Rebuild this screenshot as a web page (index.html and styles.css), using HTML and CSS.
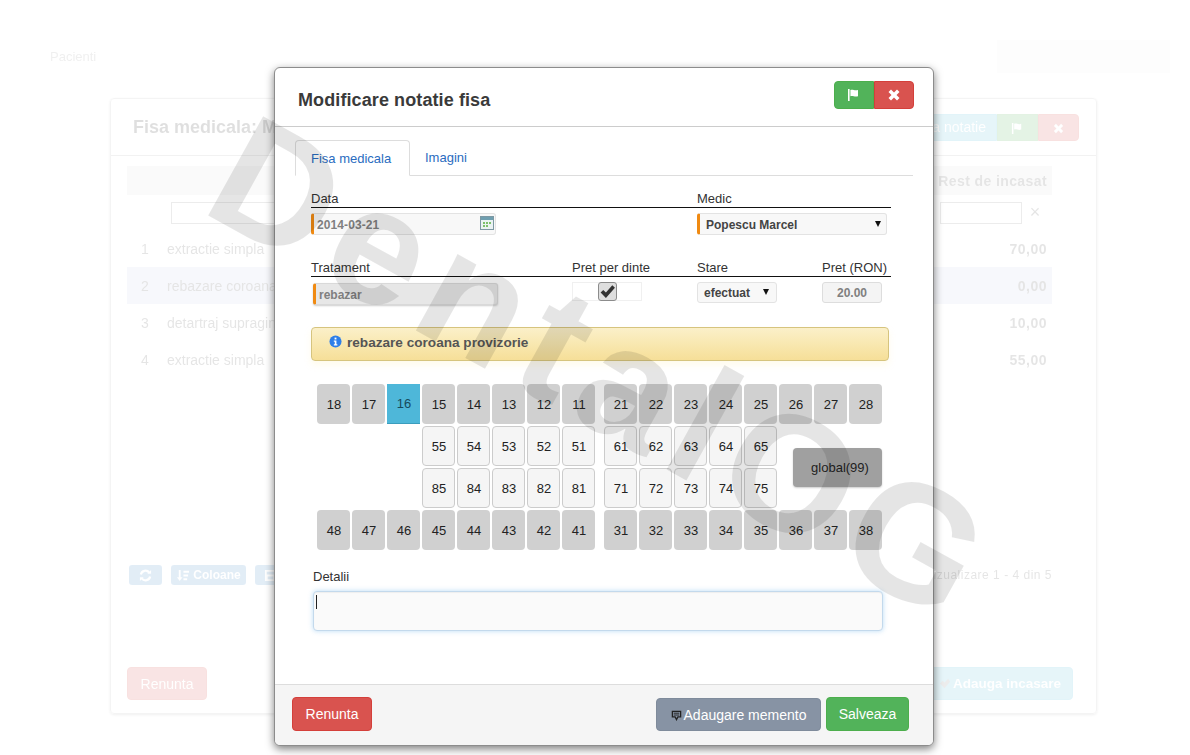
FILE: index.html
```html
<!DOCTYPE html>
<html lang="ro">
<head>
<meta charset="utf-8">
<title>Fisa medicala</title>
<link rel="stylesheet" href="styles.css">
</head>
<body>
<div class="page">
  <div class="topbar">
    <span class="brand">Pacienti</span>
    <span class="topbox"></span>
  </div>
  <section class="card">
    <header class="card-head">
      <h2>Fisa medicala: M</h2>
      <div class="btn-group">
        <button class="btn btn-info wide">Adauga notatie</button>
        <button class="btn btn-success sq"><svg class="ic" viewBox="0 0 14 14"><path d="M1 1h1.600v12H1zM3.400 2c2.500-1 4 1 7.600 0v6.200c-3.600 1-5.100-1-7.600 0z"/></svg></button>
        <button class="btn btn-danger sq"><svg class="ic" viewBox="0 0 14 14"><path d="M2 4.200 4.200 2 7 4.800 9.800 2 12 4.200 9.200 7 12 9.800 9.800 12 7 9.200 4.200 12 2 9.800 4.800 7z"/></svg></button>
      </div>
    </header>
    <div class="table">
      <div class="t-head"><span></span><span></span><b>Rest de incasat</b></div>
      <div class="t-filter"><i class="f-in f-left"></i><i class="f-in f-right"></i><em>×</em></div>
      <div class="t-row"><span>1</span><span>extractie simpla</span><b>70,00</b></div>
      <div class="t-row hl"><span>2</span><span>rebazare coroana</span><b>0,00</b></div>
      <div class="t-row"><span>3</span><span>detartraj supragingival</span><b>10,00</b></div>
      <div class="t-row"><span>4</span><span>extractie simpla</span><b>55,00</b></div>
    </div>
    <div class="tools">
      <div class="tool-left">
        <span class="tool t1"><svg class="tool-ic" viewBox="0 0 14 14"><path fill="none" stroke="#fff" stroke-width="2.400" d="M2 6a5 5 0 0 1 9-2M12 8a5 5 0 0 1-9 2"/><path d="M9 5h4V1zM5 9H1v4z"/></svg></span>
        <span class="tool t2"><svg class="tool-ic" viewBox="0 0 14 14"><path d="M3 1h2v8h2l-3 4-3-4h2zM8 2h6v2H8zM8 6h5v2H8zM8 10h4v2H8z"/></svg>Coloane</span>
        <span class="tool t3"><svg class="tool-ic" viewBox="0 0 14 14"><path d="M1 1h12v12H1zM3 3v3h8V3zM4 8v3h6V8z"/></svg></span>
      </div>
      <span class="count">Vizualizare 1 - 4 din 5</span>
    </div>
    <footer class="card-foot">
      <button class="btn btn-danger foot">Renunta</button>
      <button class="btn btn-info foot add"><svg class="tool-ic add-ic" viewBox="0 0 14 14"><path d="M2 7l3-3 2 2 4-4 2 3-6 7z"/></svg>Adauga incasare</button>
    </footer>
  </section>
</div>

<div class="modal">
  <header class="m-head">
    <h3>Modificare notatie fisa</h3>
    <div class="m-actions">
      <button class="btn btn-success m-sq"><svg class="ic" viewBox="0 0 14 14"><path d="M1 1h1.600v12H1zM3.400 2c2.500-1 4 1 7.600 0v6.200c-3.600 1-5.100-1-7.600 0z"/></svg></button>
      <button class="btn btn-danger m-sq"><svg class="ic" viewBox="0 0 14 14"><path d="M1.500 4 4 1.500 7 4.500 10 1.500 12.500 4 9.500 7 12.500 10 10 12.500 7 9.500 4 12.500 1.500 10 4.500 7z"/></svg></button>
    </div>
  </header>
  <div class="m-body">
    <nav class="tabs">
      <a class="tab active">Fisa medicala</a>
      <a class="tab">Imagini</a>
    </nav>

    <div class="form-row r1">
      <label class="l-data">Data</label>
      <label class="l-medic">Medic</label>
    </div>
    <div class="field-row f1">
      <div class="date-field">
        <input class="ctl req date" value="2014-03-21" readonly>
        <svg class="cal" viewBox="0 0 14 14"><rect x=".5" y=".5" width="13" height="13" fill="#eaf3f3" stroke="#7d98a3"/><rect x="1" y="1" width="12" height="3" fill="#6f9fb0"/><path fill="#7cc06c" d="M3 6h2v2H3zM6 6h2v2H6zM9 6h2v2H9zM3 9h2v2H3zM6 9h2v2H6z"/></svg>
      </div>
      <div class="sel-wrap medic"><select class="ctl req sel"><option>Popescu Marcel</option></select></div>
    </div>

    <div class="form-row r2">
      <label class="l-trat">Tratament</label>
      <label class="l-pret">Pret per dinte</label>
      <label class="l-stare">Stare</label>
      <label class="l-ron">Pret (RON)</label>
    </div>
    <div class="field-row f2">
      <input class="ctl req trat" value="rebazar" readonly>
      <div class="toggle">
        <span class="tog-side"></span>
        <span class="tog-btn"><svg viewBox="0 0 16 14"><path d="M1.500 8 4 5.500 6.500 8 12.500 1 15 3.500 6.500 13z"/></svg></span>
        <span class="tog-side"></span>
      </div>
      <div class="sel-wrap stare"><select class="ctl sel sel-sm"><option>efectuat</option></select></div>
      <input class="ctl price" value="20.00" readonly>
    </div>

    <div class="alert">
      <svg class="info" viewBox="0 0 14 14"><circle cx="7" cy="7" r="6.500" fill="#2f7fe8"/><rect x="6" y="2.800" width="2" height="2" fill="#fff"/><path fill="#fff" d="M5.200 6h2.800v4h1v1.200H5.200V10h1V7.200h-1z"/></svg>
      <span>rebazare coroana provizorie</span>
    </div>

    <div class="teeth">
      <div class="arch">
        <b class="t">18</b><b class="t">17</b><b class="t sel-t">16</b><b class="t">15</b><b class="t">14</b><b class="t">13</b><b class="t">12</b><b class="t">11</b>
        <b class="t lt s4">55</b><b class="t lt">54</b><b class="t lt">53</b><b class="t lt">52</b><b class="t lt">51</b>
        <b class="t lt s4">85</b><b class="t lt">84</b><b class="t lt">83</b><b class="t lt">82</b><b class="t lt">81</b>
        <b class="t">48</b><b class="t">47</b><b class="t">46</b><b class="t">45</b><b class="t">44</b><b class="t">43</b><b class="t">42</b><b class="t">41</b>
      </div>
      <div class="arch">
        <b class="t">21</b><b class="t">22</b><b class="t">23</b><b class="t">24</b><b class="t">25</b><b class="t">26</b><b class="t">27</b><b class="t">28</b>
        <b class="t lt">61</b><b class="t lt">62</b><b class="t lt">63</b><b class="t lt">64</b><b class="t lt">65</b>
        <b class="t global">global(99)</b>
        <b class="t lt">71</b><b class="t lt">72</b><b class="t lt">73</b><b class="t lt">74</b><b class="t lt">75</b>
        <b class="t">31</b><b class="t">32</b><b class="t">33</b><b class="t">34</b><b class="t">35</b><b class="t">36</b><b class="t">37</b><b class="t">38</b>
      </div>
    </div>

    <label class="l-det">Detalii</label>
    <div class="area-wrap"><textarea class="area"></textarea><i class="caret"></i></div>
  </div>
  <footer class="m-foot">
    <button class="btn btn-danger mf">Renunta</button>
    <div class="mf-right">
      <button class="btn btn-slate mf memo"><svg class="memo-ic" viewBox="0 0 12 12"><path fill="none" stroke="#222" stroke-width="1.400" d="M1.500 1.500h9v6h-3L6 10.500 4.500 7.500h-3z"/><path stroke="#222" d="M3 3.500h6M3 5.500h6"/></svg>Adaugare memento</button>
      <button class="btn btn-success mf save">Salveaza</button>
    </div>
  </footer>
</div>

<div class="watermark">DentalOG</div>
</body>
</html>
```
FILE: styles.css
```css
* { box-sizing: border-box; }
html, body { margin: 0; height: 100%; }
body {
  position: relative;
  width: 1190px;
  height: 755px;
  overflow: hidden;
  background: #fff;
  font-family: "Liberation Sans", Arial, sans-serif;
  font-size: 14px;
  color: #333;
}
button { font-family: inherit; cursor: pointer; }

/* blurred page behind the dialog */
.page {
  height: 755px;
  padding: 40px 20px 0 110px;
  opacity: .15;
  filter: blur(.7px);
}
.topbar { display: flex; justify-content: space-between; height: 58px; margin-left: -60px; }
.brand { padding-top: 9px; font-size: 13px; color: #999; }
.topbox { width: 173px; height: 33px; background: #f3f3f3; }
.card {
  display: flex;
  flex-direction: column;
  width: 987px;
  height: 616px;
  border: 1px solid #bbb;
  border-radius: 4px;
  box-shadow: 0 1px 3px rgba(0,0,0,.4);
}
.card-head {
  display: flex;
  align-items: center;
  justify-content: space-between;
  height: 57px;
  padding: 0 17px 0 22px;
  border-bottom: 1px solid #aaa;
}
.card-head h2 { margin: 0; font-size: 18px; }
.btn {
  border: 1px solid transparent;
  border-radius: 4px;
  color: #fff;
  font-size: 14px;
  padding: 0;
}
.btn-success { background: #52b35a; border-color: #4cae4c; }
.btn-danger { background: #d9534f; border-color: #d43f3a; }
.btn-info { background: #5bc0de; border-color: #46b8da; }
.btn-slate { background: #8793a4; border-color: #7f8b9b; }
.btn-group { display: flex; }
.btn-group .btn { height: 27px; border-radius: 0; }
.btn-group .btn:first-child { border-radius: 4px 0 0 4px; }
.btn-group .btn:last-child { border-radius: 0 4px 4px 0; }
.wide { width: 130px; text-align: right; padding-right: 10px; }
.sq { width: 41px; }
.ic { width: 13px; height: 13px; fill: #fff; vertical-align: middle; }
.table { margin: 10px 44px 0 16px; }
.t-head, .t-row {
  display: grid;
  grid-template-columns: 40px 1fr 120px;
  align-items: center;
  padding-right: 5px;
}
.t-head { height: 29px; background: #e4e4e4; font-size: 14px; color: #555; letter-spacing: .4px; }
.t-head b { text-align: right; white-space: nowrap; }
.t-filter { display: flex; height: 35px; align-items: center; padding-left: 44px; }
.f-in { height: 22px; border: 1px solid #888; }
.f-left { width: 240px; }
.f-right { width: 82px; margin-left: auto; }
.t-filter em { width: 22px; margin: 0 6px 0 2px; font-style: normal; font-size: 18px; color: #555; text-align: center; }
.t-row { height: 37px; color: #555; }
.t-row span:first-child { padding-left: 14px; }
.t-row b { text-align: right; letter-spacing: .5px; }
.hl { background: #cdd3ec; }
.tools {
  display: flex;
  justify-content: space-between;
  align-items: center;
  margin: 187px 44px 0 18px;
  height: 20px;
}
.tool-left { display: flex; gap: 9px; }
.tool {
  display: flex;
  align-items: center;
  justify-content: center;
  gap: 4px;
  height: 20px;
  border-radius: 3px;
  background: #428bca;
  color: #fff;
  font-size: 12px;
  font-weight: bold;
}
.tool-ic { width: 13px; height: 13px; fill: #fff; flex: none; }
.t1 { width: 33px; }
.t2 { width: 75px; }
.t3 { width: 30px; }
.count { font-size: 12px; color: #555; letter-spacing: .5px; }
.card-foot {
  display: flex;
  justify-content: space-between;
  margin-top: 82px;
  padding: 0 23px 0 16px;
}
.foot { height: 33px; }
.foot:first-child { width: 80px; }
.add { width: 143px; font-size: 13.500px; font-weight: bold; text-align: right; padding-right: 11px; }
.add-ic { fill: #888; vertical-align: -2px; margin-right: 2px; }

/* dialog */
.modal {
  position: absolute;
  left: 274px;
  top: 67px;
  width: 660px;
  height: 679px;
  display: flex;
  flex-direction: column;
  background: #fff;
  border: 1px solid #8c8c8c;
  border-radius: 6px;
  box-shadow: 0 3px 9px rgba(0,0,0,.5);
  overflow: hidden;
}
.m-head {
  flex: none;
  display: flex;
  justify-content: space-between;
  height: 59px;
  padding: 13px 19px 0 23px;
  border-bottom: 1px solid #ccc;
}
.m-head h3 { margin: 8px 0 0; font-size: 18px; line-height: 22px; color: #3a3a3a; letter-spacing: .1px; }
.m-actions { display: flex; height: 28px; }
.m-sq { width: 40px; height: 28px; border-radius: 0; line-height: 0; }
.m-actions .m-sq:first-child { border-radius: 4px 0 0 4px; }
.m-actions .m-sq:last-child { border-radius: 0 4px 4px 0; }
.m-sq .ic { width: 14px; height: 14px; }

.m-body { flex: 1; padding: 13px 20px 0 20px; position: relative; }
.tabs {
  display: flex;
  height: 36px;
  border-bottom: 1px solid #ddd;
}
.tab {
  display: block;
  padding: 11px 15px 0;
  height: 36px;
  font-size: 13px;
  line-height: 14px;
  color: #2a6cc0;
}
.tab.active {
  width: 115px;
  border: 1px solid #ddd;
  border-bottom-color: #fff;
  border-radius: 4px 4px 0 0;
  background: #fff;
}
.form-row {
  display: flex;
  height: 19px;
  margin-left: 16px;
  width: 580px;
  border-bottom: 1px solid #111;
  font-size: 13px;
  line-height: 14px;
  color: #333;
  align-items: flex-end;
  padding-bottom: 1px;
}
.r1 { margin-top: 13px; }
.r2 { margin-top: 23px; }
.l-data { width: 386px; }
.l-trat { width: 261px; }
.l-pret { width: 125px; }
.l-stare { width: 125px; }
.l-ron { white-space: nowrap; }
.field-row { display: flex; margin-left: 16px; }
.f1 { margin-top: 5px; height: 22px; }
.f2 { margin-top: 6px; height: 23px; }
.ctl {
  display: block;
  height: 22px;
  border: 1px solid #e3e3e3;
  border-radius: 3px;
  background: #f8f8f8;
  font-family: inherit;
  font-size: 12px;
  font-weight: bold;
  color: #444;
  outline: none;
  padding: 1px 4px 0;
}
.req { border-left: 3px solid #f08a12; }
.date-field { position: relative; width: 185px; margin-right: 201px; }
.date { width: 185px; color: #808080; letter-spacing: .1px; padding-left: 3px; }
.cal { position: absolute; right: 2px; top: 3px; width: 14px; height: 14px; }
.sel-wrap { position: relative; }
.sel-wrap::after {
  content: "";
  position: absolute;
  right: 6px;
  top: 8px;
  border-style: solid;
  border-width: 6px 3.500px 0;
  border-color: #111 transparent transparent;
  pointer-events: none;
}
.sel { appearance: none; -webkit-appearance: none; }
.medic .sel { width: 190px; padding-left: 6px; }
.trat {
  width: 185px;
  margin-left: 2px;
  background: #e7e7e7;
  border-color: #d9d9d9;
  border-left-color: #f08a12;
  color: #808080;
  padding-left: 3px;
  box-shadow: 0 1px 2px rgba(0,0,0,.2);
}
.toggle { display: flex; width: 70px; height: 19px; margin: -1px 55px 0 74px; border: 1px solid #f0f0f0; }
.tog-side { flex: 1; background: #fff; }
.tog-btn {
  flex: none;
  width: 19px;
  height: 19px;
  margin-top: -1px;
  background: #dedede;
  border: 1px solid #8c8c8c;
  border-radius: 3px;
  display: flex;
  align-items: center;
  justify-content: center;
}
.tog-btn svg { width: 17px; height: 15px; fill: #333; flex: none; }
.stare { margin-top: -1px; }
.stare .sel-sm { width: 80px; height: 21px; padding-left: 6px; }
.stare::after { top: 7px; right: 8px; }
.price {
  width: 60px;
  height: 21px;
  margin: -1px 0 0 45px;
  text-align: center;
  background: #f4f4f4;
  border-color: #ddd;
  color: #808080;
}
.alert {
  display: flex;
  align-items: center;
  gap: 5px;
  height: 34px;
  margin: 21px 24px 0 16px;
  padding: 0 0 3px 17px;
  border: 1px solid #d6c47e;
  border-radius: 4px;
  background: linear-gradient(#fbf0c9, #f6df98);
  box-shadow: 0 4px 6px rgba(255,240,180,.25);
  font-size: 13.600px;
  font-weight: bold;
  color: #555;
}
.info { width: 13px; height: 13px; margin-top: -3px; }
.teeth { display: flex; gap: 9px; margin: 23px 0 0 22px; }
.arch {
  display: grid;
  grid-template-columns: repeat(8, 33px);
  grid-template-rows: repeat(4, 40px);
  gap: 2px;
}
.t {
  display: flex;
  align-items: center;
  justify-content: center;
  padding-left: 1px;
  border-radius: 4px;
  background: #d0d0d0;
  font-size: 13px;
  font-weight: normal;
  color: #222;
}
.lt { background: #f5f5f5; border: 1px solid #ccc; }
.sel-t { background: #4eb7d9; border-radius: 0; border-bottom: 1px solid #3b9dbd; color: #174a5c; }
.s4 { grid-column-start: 4; }
.global {
  grid-column: 6 / 9;
  grid-row: 2 / 4;
  justify-self: end;
  align-self: center;
  width: 89px;
  height: 39px;
  padding-left: 5px;
  background: #a0a0a0;
  box-shadow: 0 1px 2px rgba(0,0,0,.2);
}
.l-det { display: block; margin: 20px 0 0 18px; font-size: 13px; line-height: 14px; color: #333; }
.area-wrap { position: relative; margin: 7px 30px 0 18px; height: 40px; }
.area {
  display: block;
  width: 570px;
  height: 40px;
  resize: none;
  outline: none;
  background: #fafafa;
  border: 1px solid #c3d9ec;
  border-radius: 4px;
  box-shadow: 0 0 5px rgba(102,175,233,.45), inset 0 1px 1px rgba(0,0,0,.05);
}
.caret { position: absolute; left: 3px; top: 4px; width: 1px; height: 14px; background: #222; }

.m-foot {
  flex: none;
  display: flex;
  justify-content: space-between;
  height: 61px;
  padding: 12px 24px 0 17px;
  background: #f5f5f5;
  border-top: 1px solid #ddd;
}
.mf { height: 34px; font-size: 14px; }
.mf-right { display: flex; gap: 5px; }
.m-foot > .mf { width: 80px; }
.memo { width: 165px; height: 33px; margin-top: 1px; }
.memo-ic { width: 11px; height: 11px; margin-right: 2px; vertical-align: -1px; }
.save { width: 83px; }

/* diagonal watermark across the whole screen */
.watermark {
  position: absolute;
  left: 186px;
  top: 68px;
  font-size: 165px;
  line-height: 1;
  font-weight: bold;
  letter-spacing: 13px;
  white-space: nowrap;
  color: rgba(0,0,0,.1);
  transform-origin: 0 100%;
  transform: rotate(29deg);
  pointer-events: none;
}
```
